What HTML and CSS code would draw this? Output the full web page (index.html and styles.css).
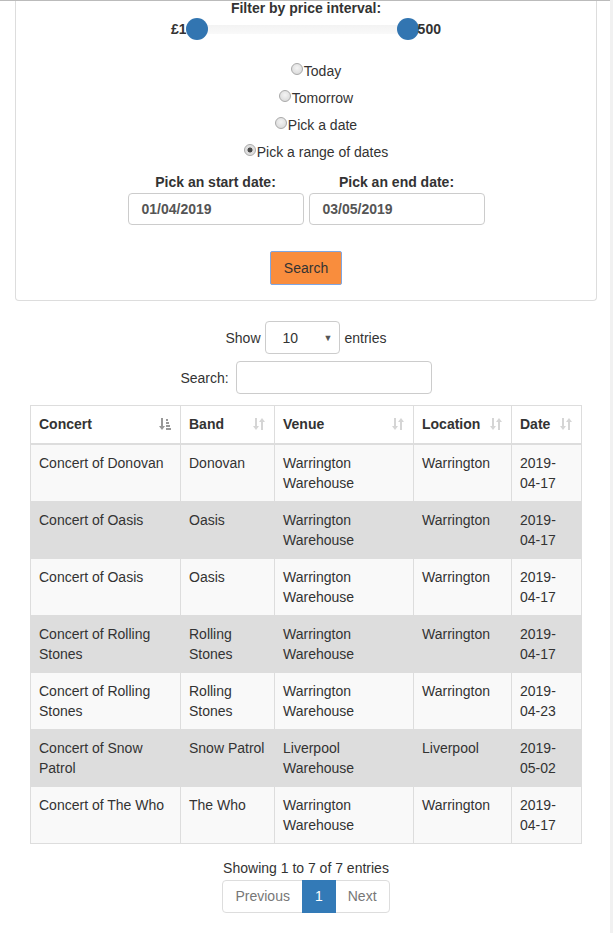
FILE: index.html
```html
<!DOCTYPE html>
<html>
<head>
<meta charset="utf-8">
<link rel="stylesheet" href="styles.css">
</head>
<body>
<div class="page">
  <div class="topline"></div>
  <div class="main">
    <div class="panel">
      <div class="filter-title">Filter by price interval:</div>
      <div class="slider-row">
        <span class="price">£1</span>
        <div class="slider">
          <div class="track"></div>
          <span class="handle handle-min"></span>
          <span class="handle handle-max"></span>
        </div>
        <span class="price price-max">500</span>
      </div>
      <div class="radios">
        <label class="radio-line"><input type="radio" name="when" class="radio">Today</label>
        <label class="radio-line"><input type="radio" name="when" class="radio">Tomorrow</label>
        <label class="radio-line"><input type="radio" name="when" class="radio">Pick a date</label>
        <label class="radio-line"><input type="radio" name="when" class="radio" checked>Pick a range of dates</label>
      </div>
      <div class="dates">
        <div class="date-col">
          <div class="date-label">Pick an start date:</div>
          <div class="date-input">01/04/2019</div>
        </div>
        <div class="date-col">
          <div class="date-label">Pick an end date:</div>
          <div class="date-input">03/05/2019</div>
        </div>
      </div>
      <div class="btn-row"><button class="btn-search">Search</button></div>
    </div>

    <div class="length-row">
      <span>Show</span>
      <div class="select-box"><span class="select-val">10</span><span class="select-arrow">▼</span></div>
      <span>entries</span>
    </div>
    <div class="filter-row">
      <span>Search:</span>
      <div class="search-input"></div>
    </div>

    <table class="data">
      <colgroup>
        <col class="c1"><col class="c2"><col class="c3"><col class="c4"><col class="c5">
      </colgroup>
      <thead>
        <tr>
          <th>Concert<svg class="sort active" viewBox="0 0 12 14" width="12" height="14"><rect x="2" y="1" width="2" height="9"/><polygon points="0,9 6,9 3,13"/><rect x="7" y="2" width="2" height="2"/><rect x="7" y="5" width="3" height="2"/><rect x="7" y="8" width="4" height="2"/><rect x="7" y="11" width="5" height="2"/></svg></th>
          <th>Band<svg class="sort" viewBox="0 0 12 14" width="12" height="14"><rect x="2" y="1" width="2" height="9"/><polygon points="0,9 6,9 3,13"/><rect x="8" y="4" width="2" height="9"/><polygon points="6,5 12,5 9,1"/></svg></th>
          <th>Venue<svg class="sort" viewBox="0 0 12 14" width="12" height="14"><rect x="2" y="1" width="2" height="9"/><polygon points="0,9 6,9 3,13"/><rect x="8" y="4" width="2" height="9"/><polygon points="6,5 12,5 9,1"/></svg></th>
          <th>Location<svg class="sort" viewBox="0 0 12 14" width="12" height="14"><rect x="2" y="1" width="2" height="9"/><polygon points="0,9 6,9 3,13"/><rect x="8" y="4" width="2" height="9"/><polygon points="6,5 12,5 9,1"/></svg></th>
          <th>Date<svg class="sort" viewBox="0 0 12 14" width="12" height="14"><rect x="2" y="1" width="2" height="9"/><polygon points="0,9 6,9 3,13"/><rect x="8" y="4" width="2" height="9"/><polygon points="6,5 12,5 9,1"/></svg></th>
        </tr>
      </thead>
      <tbody>
        <tr><td>Concert of Donovan</td><td>Donovan</td><td>Warrington Warehouse</td><td>Warrington</td><td>2019-04-17</td></tr>
        <tr><td>Concert of Oasis</td><td>Oasis</td><td>Warrington Warehouse</td><td>Warrington</td><td>2019-04-17</td></tr>
        <tr><td>Concert of Oasis</td><td>Oasis</td><td>Warrington Warehouse</td><td>Warrington</td><td>2019-04-17</td></tr>
        <tr><td>Concert of Rolling Stones</td><td>Rolling Stones</td><td>Warrington Warehouse</td><td>Warrington</td><td>2019-04-17</td></tr>
        <tr><td>Concert of Rolling Stones</td><td>Rolling Stones</td><td>Warrington Warehouse</td><td>Warrington</td><td>2019-04-23</td></tr>
        <tr><td>Concert of Snow Patrol</td><td>Snow Patrol</td><td>Liverpool Warehouse</td><td>Liverpool</td><td>2019-05-02</td></tr>
        <tr><td>Concert of The Who</td><td>The Who</td><td>Warrington Warehouse</td><td>Warrington</td><td>2019-04-17</td></tr>
      </tbody>
    </table>

    <div class="info">Showing 1 to 7 of 7 entries</div>
    <div class="pager">
      <span class="page-link disabled first">Previous</span>
      <span class="page-link current">1</span>
      <span class="page-link disabled last">Next</span>
    </div>
  </div>
</div>
</body>
</html>
```

FILE: styles.css
```css
* { box-sizing: border-box; }
html, body { margin: 0; padding: 0; background: #fff; }
body {
  font-family: "Liberation Sans", Arial, sans-serif;
  font-size: 14px;
  line-height: 20px;
  color: #333;
}
.page {
  min-height: 933px;
  margin-right: 1px;
  border-right: 3px solid #f1f1f1;
}
.topline { height: 1px; background: #bbb; }
.main {
  width: 582px;
  margin-left: 15px;
  display: flex;
  flex-direction: column;
  align-items: center;
}
.panel {
  width: 582px;
  border: 1px solid #ddd;
  border-top: none;
  border-radius: 0 0 4px 4px;
  padding-bottom: 15px;
  display: flex;
  flex-direction: column;
  align-items: center;
}
.filter-title {
  font-weight: bold;
  line-height: 16px;
  margin-top: -1px;
}
.slider-row {
  display: flex;
  align-items: center;
  height: 24px;
  margin-top: 1px;
  font-weight: bold;
}
.price { position: relative; z-index: 0; }
.slider {
  position: relative;
  width: 233px;
  height: 24px;
  margin-left: -1px;
  margin-right: 0;
  display: flex;
  align-items: center;
}
.track {
  width: 100%;
  height: 9px;
  background: linear-gradient(#f3f3f3, #f9f9f9);
  border-radius: 2px;
}
.handle {
  position: absolute;
  top: 1px;
  width: 22px;
  height: 22px;
  border-radius: 50%;
  background: #3275b1;
}
.handle-min { left: 0; }
.handle-max { right: 0; }
.price-max { position: relative; z-index: 1; margin-left: -1px; }

.radios {
  margin-top: 20px;
  display: flex;
  flex-direction: column;
  align-items: center;
  gap: 7px;
}
.radio-line {
  display: flex;
  align-items: center;
  padding-left: 20px;
  height: 20px;
}
.radio {
  appearance: none;
  -webkit-appearance: none;
  width: 12px;
  height: 12px;
  margin: -4px 1px 0 0;
  border-radius: 50%;
  border: 1px solid #a9a9a9;
  background: radial-gradient(circle at 50% 40%, #f4f4f4, #d4d4d4);
}
.radio:checked {
  background: radial-gradient(circle, #4a4a4a 0, #4a4a4a 2.2px, #dcdcdc 2.8px, #e6e6e6 100%);
}

.dates {
  margin-top: 12px;
  display: flex;
  gap: 5px;
}
.date-col {
  display: flex;
  flex-direction: column;
  align-items: center;
}
.date-label {
  font-weight: bold;
  line-height: 16px;
}
.date-input {
  margin-top: 3px;
  width: 176px;
  height: 32px;
  border: 1px solid #ccc;
  border-radius: 4px;
  padding: 5px 13px;
  font-weight: bold;
  color: #555;
}
.btn-row { margin-top: 26px; }
.btn-search {
  font-family: inherit;
  font-size: 14px;
  line-height: 20px;
  color: #333;
  background: #f98d3d;
  border: 1px solid #7fa6e3;
  border-radius: 2px;
  padding: 6px 12px;
  height: 34px;
  width: 72px;
}

.length-row {
  margin-top: 20px;
  display: flex;
  align-items: center;
  gap: 4px;
}
.select-box {
  width: 75px;
  height: 33px;
  border: 1px solid #ccc;
  border-radius: 4px;
  display: flex;
  align-items: center;
  justify-content: space-between;
  padding: 0 6px 0 17px;
  margin-right: 1px;
}
.select-arrow { font-size: 9px; color: #555; }
.filter-row {
  margin-top: 7px;
  display: flex;
  align-items: center;
  gap: 7px;
}
.search-input {
  width: 196px;
  height: 33px;
  border: 1px solid #ccc;
  border-radius: 4px;
}

.data {
  margin-top: 11px;
  width: 551px;
  border-collapse: collapse;
  table-layout: fixed;
  border: 1px solid #ddd;
}
.c1 { width: 150px; }
.c2 { width: 94px; }
.c3 { width: 139px; }
.c4 { width: 98px; }
.c5 { width: 70px; }
.data th, .data td {
  border: 1px solid #ddd;
  padding: 8px;
  text-align: left;
  vertical-align: top;
}
.data th {
  position: relative;
  font-weight: bold;
  border-bottom: 2px solid #ddd;
  padding-right: 28px;
  padding-bottom: 9px;
  white-space: nowrap;
}
.sort {
  position: absolute;
  right: 9px;
  top: 11px;
  fill: #333;
  opacity: 0.2;
}
.sort.active { opacity: 0.5; }
.data tbody tr:nth-child(odd) td { background: #f9f9f9; }
.data tbody tr:nth-child(even) td { background: #ddd; }

.info { margin-top: 14px; }
.pager {
  margin-top: 2px;
  display: flex;
}
.page-link {
  display: block;
  padding: 6px 12px;
  line-height: 19px;
  border: 1px solid #ddd;
  margin-left: -1px;
  color: #777;
  background: #fff;
}
.page-link.first { margin-left: 0; border-radius: 4px 0 0 4px; }
.page-link.last { border-radius: 0 4px 4px 0; }
.page-link.current {
  background: #337ab7;
  border-color: #337ab7;
  color: #fff;
  position: relative;
  z-index: 1;
}
```
